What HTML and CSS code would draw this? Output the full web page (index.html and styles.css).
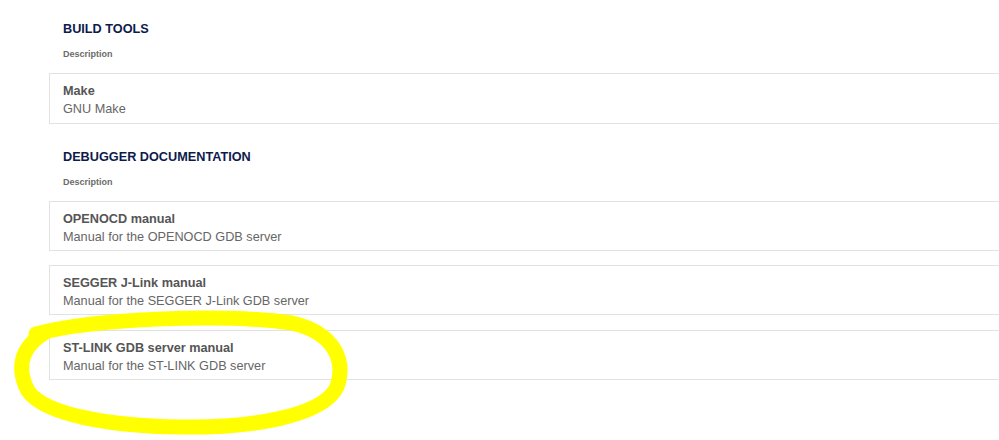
FILE: index.html
```html
<!DOCTYPE html>
<html lang="en">
<head>
<meta charset="utf-8">
<title>Tools</title>
<link rel="stylesheet" href="styles.css">
</head>
<body>
<div class="page">
  <section class="section">
    <h2 class="section-title">BUILD TOOLS</h2>
    <div class="section-desc">Description</div>
    <div class="card card-first">
      <div class="card-title">Make</div>
      <div class="card-text">GNU Make</div>
    </div>
  </section>
  <section class="section section-next">
    <h2 class="section-title">DEBUGGER DOCUMENTATION</h2>
    <div class="section-desc">Description</div>
    <div class="card">
      <div class="card-title">OPENOCD manual</div>
      <div class="card-text">Manual for the OPENOCD GDB server</div>
    </div>
    <div class="card">
      <div class="card-title">SEGGER J-Link manual</div>
      <div class="card-text">Manual for the SEGGER J-Link GDB server</div>
    </div>
    <div class="card card-last">
      <div class="card-title">ST-LINK GDB server manual</div>
      <div class="card-text">Manual for the ST-LINK GDB server</div>
    </div>
  </section>
</div>
<svg class="annotation" width="999" height="440" viewBox="0 0 999 440" aria-hidden="true">
  <path d="M 36 334 C 90 319, 220 313, 292 323 C 335 333, 346 361, 337 387 C 322 417, 250 428, 180 427 C 110 426, 45 415, 28 391 C 15 366, 22 345, 48 331" fill="none" stroke="#ffff00" stroke-width="15" stroke-linecap="round" stroke-linejoin="round"/>
</svg>
</body>
</html>
```

FILE: styles.css
```css
html, body {
  margin: 0;
  padding: 0;
  background: #ffffff;
  overflow: hidden;
}

body {
  font-family: "Liberation Sans", Arial, sans-serif;
  width: 999px;
  height: 440px;
  position: relative;
}

.page {
  padding: 21px 0 0 49px;
}

.section-next {
  margin-top: 25px;
}

.section-title {
  margin: 0 0 0 14px;
  font-size: 12.7px;
  line-height: 16px;
  font-weight: bold;
  color: #0d1b4c;
}

.section-desc {
  margin: 11px 0 13px 14px;
  font-size: 9px;
  line-height: 12px;
  font-weight: bold;
  color: #6b6b6b;
}

.card {
  box-sizing: border-box;
  width: 950px;
  border: 1px solid #e2e2e2;
  border-right: 0;
  padding: 8px 13px 4px;
  margin-bottom: 14px;
}

.card-first {
  padding-bottom: 5px;
}

.card-last {
  margin-top: 15px;
}

.card:last-child {
  margin-bottom: 0;
}

.card-title {
  font-size: 12.7px;
  line-height: 18px;
  font-weight: bold;
  color: #555555;
}

.card-text {
  font-size: 12.7px;
  line-height: 18px;
  color: #666666;
}

.annotation {
  position: absolute;
  left: 0;
  top: 0;
  pointer-events: none;
}
```
